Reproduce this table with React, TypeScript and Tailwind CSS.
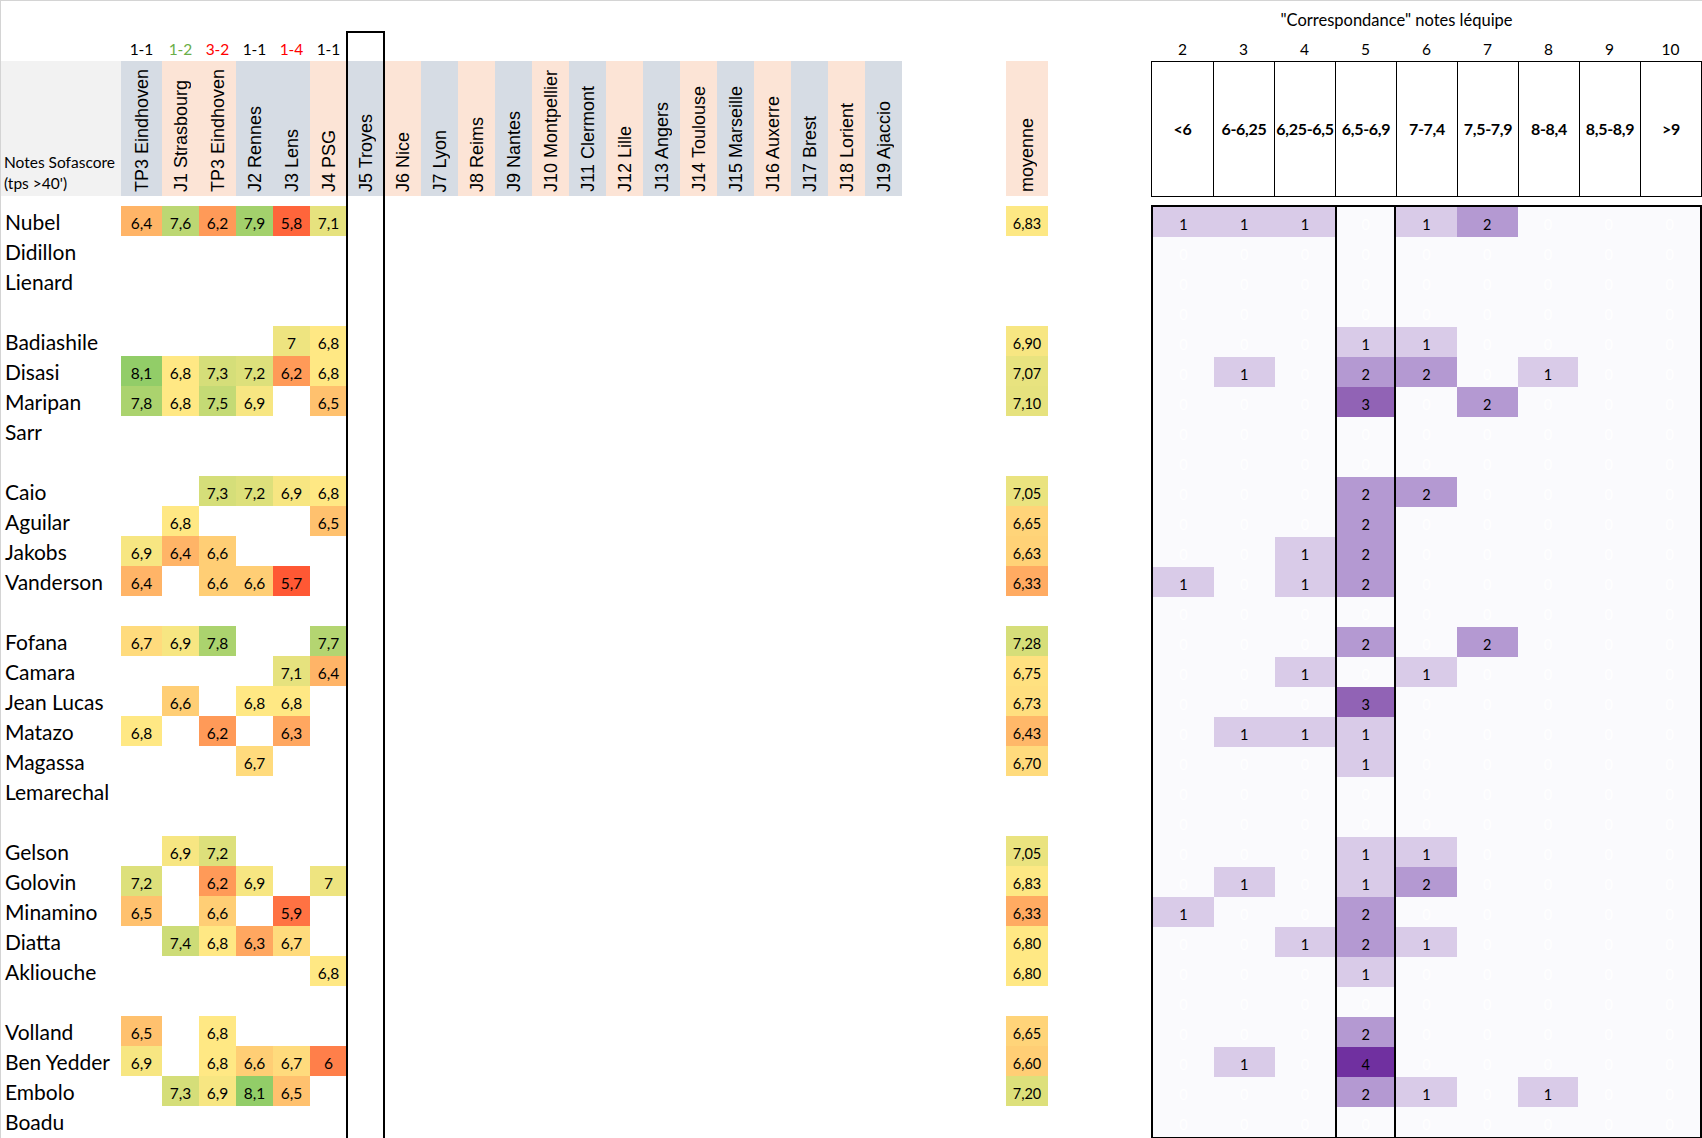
import React from "react"

type Player = { name: string; v: (string | null)[]; avg?: string } | null

const matches = [
  { label: "TP3 Eindhoven", bg: "bg-[#d6dce4]", score: "1-1", sc: "text-black" },
  { label: "J1 Strasbourg", bg: "bg-[#fce4d6]", score: "1-2", sc: "text-[#6aae48]" },
  { label: "TP3 Eindhoven", bg: "bg-[#fce4d6]", score: "3-2", sc: "text-[#ff0000]" },
  { label: "J2 Rennes", bg: "bg-[#d6dce4]", score: "1-1", sc: "text-black" },
  { label: "J3 Lens", bg: "bg-[#d6dce4]", score: "1-4", sc: "text-[#ff0000]" },
  { label: "J4 PSG", bg: "bg-[#fce4d6]", score: "1-1", sc: "text-black" },
  { label: "J5 Troyes", bg: "bg-[#d6dce4]" },
  { label: "J6 Nice", bg: "bg-[#fce4d6]" },
  { label: "J7 Lyon", bg: "bg-[#d6dce4]" },
  { label: "J8 Reims", bg: "bg-[#fce4d6]" },
  { label: "J9 Nantes", bg: "bg-[#d6dce4]" },
  { label: "J10 Montpellier", bg: "bg-[#fce4d6]" },
  { label: "J11 Clermont", bg: "bg-[#d6dce4]" },
  { label: "J12 Lille", bg: "bg-[#fce4d6]" },
  { label: "J13 Angers", bg: "bg-[#d6dce4]" },
  { label: "J14 Toulouse", bg: "bg-[#fce4d6]" },
  { label: "J15 Marseille", bg: "bg-[#d6dce4]" },
  { label: "J16 Auxerre", bg: "bg-[#fce4d6]" },
  { label: "J17 Brest", bg: "bg-[#d6dce4]" },
  { label: "J18 Lorient", bg: "bg-[#fce4d6]" },
  { label: "J19 Ajaccio", bg: "bg-[#d6dce4]" },
]

const players: Player[] = [
  { name: "Nubel", v: ["6,4", "7,6", "6,2", "7,9", "5,8", "7,1"], avg: "6,83" },
  { name: "Didillon", v: [] },
  { name: "Lienard", v: [] },
  null,
  { name: "Badiashile", v: [null, null, null, null, "7", "6,8"], avg: "6,90" },
  { name: "Disasi", v: ["8,1", "6,8", "7,3", "7,2", "6,2", "6,8"], avg: "7,07" },
  { name: "Maripan", v: ["7,8", "6,8", "7,5", "6,9", null, "6,5"], avg: "7,10" },
  { name: "Sarr", v: [] },
  null,
  { name: "Caio", v: [null, null, "7,3", "7,2", "6,9", "6,8"], avg: "7,05" },
  { name: "Aguilar", v: [null, "6,8", null, null, null, "6,5"], avg: "6,65" },
  { name: "Jakobs", v: ["6,9", "6,4", "6,6"], avg: "6,63" },
  { name: "Vanderson", v: ["6,4", null, "6,6", "6,6", "5,7"], avg: "6,33" },
  null,
  { name: "Fofana", v: ["6,7", "6,9", "7,8", null, null, "7,7"], avg: "7,28" },
  { name: "Camara", v: [null, null, null, null, "7,1", "6,4"], avg: "6,75" },
  { name: "Jean Lucas", v: [null, "6,6", null, "6,8", "6,8"], avg: "6,73" },
  { name: "Matazo", v: ["6,8", null, "6,2", null, "6,3"], avg: "6,43" },
  { name: "Magassa", v: [null, null, null, "6,7"], avg: "6,70" },
  { name: "Lemarechal", v: [] },
  null,
  { name: "Gelson", v: [null, "6,9", "7,2"], avg: "7,05" },
  { name: "Golovin", v: ["7,2", null, "6,2", "6,9", null, "7"], avg: "6,83" },
  { name: "Minamino", v: ["6,5", null, "6,6", null, "5,9"], avg: "6,33" },
  { name: "Diatta", v: [null, "7,4", "6,8", "6,3", "6,7"], avg: "6,80" },
  { name: "Akliouche", v: [null, null, null, null, null, "6,8"], avg: "6,80" },
  null,
  { name: "Volland", v: ["6,5", null, "6,8"], avg: "6,65" },
  { name: "Ben Yedder", v: ["6,9", null, "6,8", "6,6", "6,7", "6"], avg: "6,60" },
  { name: "Embolo", v: [null, "7,3", "6,9", "8,1", "6,5"], avg: "7,20" },
  { name: "Boadu", v: [] },
]

// red -> yellow -> green scale, written out per value
const heat: Record<string, string> = {
  "5,7": "bg-[#ff5834]",
  "5,8": "bg-[#ff653b]",
  "5,9": "bg-[#ff7243]",
  "6": "bg-[#ff7f4a]",
  "6,2": "bg-[#ff9a58]",
  "6,3": "bg-[#ffa760]",
  "6,33": "bg-[#ffab62]",
  "6,4": "bg-[#ffb467]",
  "6,43": "bg-[#ffb869]",
  "6,5": "bg-[#ffc16e]",
  "6,6": "bg-[#ffce75]",
  "6,60": "bg-[#ffce75]",
  "6,63": "bg-[#ffd277]",
  "6,65": "bg-[#ffd479]",
  "6,7": "bg-[#ffdb7d]",
  "6,70": "bg-[#ffdb7d]",
  "6,73": "bg-[#ffdf7f]",
  "6,75": "bg-[#ffe180]",
  "6,8": "bg-[#ffe884]",
  "6,80": "bg-[#ffe884]",
  "6,83": "bg-[#fde884]",
  "6,9": "bg-[#f7e682]",
  "6,90": "bg-[#f7e682]",
  "7": "bg-[#eee480]",
  "7,05": "bg-[#eae37f]",
  "7,07": "bg-[#e8e37f]",
  "7,1": "bg-[#e6e27e]",
  "7,10": "bg-[#e6e27e]",
  "7,2": "bg-[#dde07b]",
  "7,20": "bg-[#dde07b]",
  "7,28": "bg-[#d6de79]",
  "7,3": "bg-[#d5de79]",
  "7,4": "bg-[#cddc77]",
  "7,5": "bg-[#c4da75]",
  "7,6": "bg-[#bcd773]",
  "7,7": "bg-[#b4d571]",
  "7,8": "bg-[#abd36e]",
  "7,9": "bg-[#a3d16c]",
  "8,1": "bg-[#92cd68]",
}

const purple: Record<number, string> = {
  1: "bg-[#d9cbe8]",
  2: "bg-[#b499d2]",
  3: "bg-[#9163b5]",
  4: "bg-[#7030a0]",
}

const ranges = ["<6", "6-6,25", "6,25-6,5", "6,5-6,9", "7-7,4", "7,5-7,9", "8-8,4", "8,5-8,9", ">9"]

function bucket(s: string) {
  const n = parseFloat(s.replace(",", "."))
  if (n < 6) return 0
  if (n < 6.25) return 1
  if (n < 6.5) return 2
  if (n < 7) return 3
  if (n < 7.5) return 4
  if (n < 8) return 5
  if (n < 8.5) return 6
  if (n < 9) return 7
  return 8
}

function counts(p: Player) {
  const c = [0, 0, 0, 0, 0, 0, 0, 0, 0]
  if (p) p.v.forEach((s) => s && c[bucket(s)]++)
  return c
}

function VLabel({ text }: { text: string }) {
  return (
    <span className="[font-family:Liberation_Sans,Arial,sans-serif] [writing-mode:vertical-rl] rotate-180 whitespace-nowrap text-[18px] leading-none">
      {text}
    </span>
  )
}

export default function App() {
  return (
    <div className="relative w-[1702px] h-[1138px] overflow-hidden bg-white border-t border-l border-[#d4d4d4] text-black [font-family:Lato,sans-serif]">
      <div className="flex">
        {/* notes table */}
        <div className="w-[901px] flex flex-col">
          <div className="h-[38px]" />
          <div className="h-[22px] flex">
            <div className="w-[120px]" />
            {matches.map((m, i) => (
              <div key={i} className={`${i === 0 ? "w-[41px]" : "w-[37px]"} flex items-center justify-center text-[15.5px] ${m.sc ?? ""}`}>
                {m.score}
              </div>
            ))}
          </div>
          <div className="h-[135px] flex">
            <div className="w-[120px] bg-[#f2f2f2] flex flex-col justify-end pl-[3px] pb-[2px] text-[15.5px] leading-[21px]">
              <span>Notes Sofascore</span>
              <span>(tps &gt;40')</span>
            </div>
            {matches.map((m, i) => (
              <div key={i} className={`${i === 0 ? "w-[41px]" : "w-[37px]"} ${m.bg} flex items-end justify-center pb-[4px]`}>
                <VLabel text={m.label} />
              </div>
            ))}
          </div>
          <div className="h-[10px]" />
          {players.map((p, r) => (
            <div key={r} className="h-[30px] flex">
              <div className="w-[120px] pl-[4px] pt-[1px] flex items-center text-[21px] whitespace-nowrap">{p?.name}</div>
              {matches.map((_, i) => {
                const val = p?.v[i] ?? null
                return (
                  <div
                    key={i}
                    className={`${i === 0 ? "w-[41px]" : "w-[37px]"} ${val ? heat[val] : ""} flex items-center justify-center pt-[5px] text-[15.5px]`}
                  >
                    {val}
                  </div>
                )
              })}
            </div>
          ))}
        </div>

        {/* averages */}
        <div className="ml-[104px] w-[42px] flex flex-col">
          <div className="h-[60px]" />
          <div className="h-[135px] bg-[#fce4d6] flex items-end justify-center pb-[4px]">
            <VLabel text="moyenne" />
          </div>
          <div className="h-[10px]" />
          {players.map((p, r) => (
            <div key={r} className={`h-[30px] flex items-center justify-center pt-[5px] text-[14.5px] ${p?.avg ? heat[p.avg] : ""}`}>
              {p?.avg}
            </div>
          ))}
        </div>

        {/* correspondance matrix */}
        <div className="ml-[103px] w-[551px] flex flex-col">
          <div className="h-[37px] w-[491px] flex items-center justify-center pt-[2px] text-[16.5px] whitespace-nowrap">
            "Correspondance" notes léquipe
          </div>
          <div className="h-[23px] grid grid-cols-9 px-[1px]">
            {ranges.map((_, i) => (
              <div key={i} className="flex items-center justify-center text-[15.5px]">
                {i + 2}
              </div>
            ))}
          </div>
          <div className="h-[136px] grid grid-cols-9 border border-black">
            {ranges.map((r, i) => (
              <div key={i} className={`${i > 0 ? "border-l border-black" : ""} flex items-center justify-center font-bold text-[16px] whitespace-nowrap tracking-[-0.3px]`}>
                {r}
              </div>
            ))}
          </div>
          <div className="h-[8px]" />
          <div className="border-2 border-black bg-[#fafafd] flex flex-col">
            {players.map((p, r) => {
              const c = counts(p)
              return (
                <div key={r} className="h-[30px] grid grid-cols-9">
                  {c.map((n, i) => (
                    <div
                      key={i}
                      className={`${i === 3 ? "border-x-2 border-black" : ""} ${n ? purple[n] : "text-white"} flex items-center justify-center pt-[5px] text-[14.5px]`}
                    >
                      {n}
                    </div>
                  ))}
                </div>
              )
            })}
          </div>
        </div>
      </div>

      {/* J5 Troyes frame */}
      <div className="absolute left-[345px] top-[30px] w-[39px] h-[1110px] border-2 border-black" />
    </div>
  )
}
